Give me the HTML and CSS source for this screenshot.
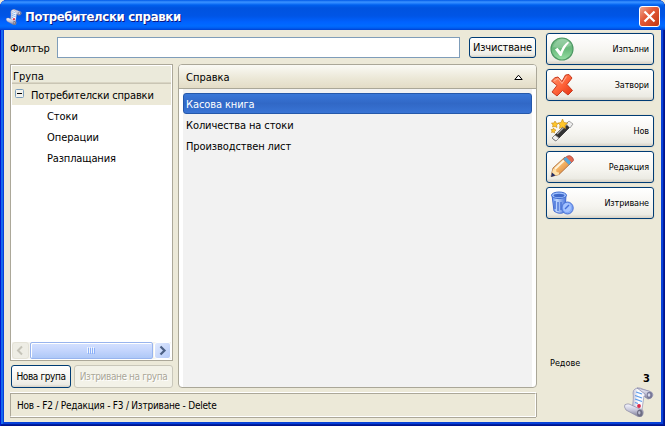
FILE: index.html
```html
<!DOCTYPE html>
<html lang="bg">
<head>
<meta charset="utf-8">
<title>Потребителски справки</title>
<link rel="stylesheet" href="styles.css">
</head>
<body>
<svg class="defs" width="0" height="0">
  <defs>
    <linearGradient id="green" x2="0" y2="1"><stop stop-color="#88c998"/><stop offset=".5" stop-color="#68b97b"/><stop offset="1" stop-color="#98e0a5"/></linearGradient>
    <linearGradient id="red" x2="1" y2="1"><stop stop-color="#ff9a72"/><stop offset=".5" stop-color="#ff6339"/><stop offset="1" stop-color="#e32f10"/></linearGradient>
    <linearGradient id="wood" x2="1" y2="1"><stop stop-color="#fff0ce"/><stop offset=".45" stop-color="#f5b666"/><stop offset="1" stop-color="#c96724"/></linearGradient>
    <linearGradient id="bin" x2="1"><stop stop-color="#5d91f2"/><stop offset=".35" stop-color="#c0d8ff"/><stop offset="1" stop-color="#4b75db"/></linearGradient>
    <linearGradient id="paper" x2="1"><stop stop-color="#b9b9d2"/><stop offset=".35" stop-color="#fff"/><stop offset=".8" stop-color="#eeeef8"/><stop offset="1" stop-color="#a9a9c4"/></linearGradient>
    <linearGradient id="roll" x2="0" y2="1"><stop stop-color="#f7f7ff"/><stop offset=".5" stop-color="#c4c4d8"/><stop offset="1" stop-color="#77778f"/></linearGradient>
    <symbol id="scroll" viewBox="0 0 30 30">
      <path d="M11 2Q13 .5 16 1L26 5 22 10 20 9 17 29 8 22Q10 11 9 6 9 3 11 2Z" fill="url(#paper)" stroke="#9292b3" stroke-width=".7"/>
      <path d="M13 1 25 4Q29 5 29 8 28 12 24 12L21 10 21 7Z" fill="url(#roll)" stroke="#8585a7" stroke-width=".7"/>
      <ellipse cx="25.5" cy="8" rx="2.7" ry="3.3" fill="#777898"/><ellipse cx="25" cy="8" rx="1.3" ry="1.8" fill="#d7d8ec"/>
      <path d="M12 5 18 7M11 8.5 18 11M11 12 18 14.5M11 15.5 14 16.5" stroke="#5b9bea" stroke-width="1.3"/>
      <path d="M3 17Q0 17 .5 20L2 23 14 29.5Q18 31 19 27 20 22 16 22L5 17Z" fill="url(#roll)" stroke="#8989a5" stroke-width=".7"/>
      <ellipse cx="15.8" cy="26" rx="2.8" ry="3.6" fill="#6e6e83"/><ellipse cx="15.3" cy="25.7" rx="1.2" ry="1.8" fill="#bdbdd1"/>
      <circle cx="15" cy="19" r="1.9" fill="#d82647"/>
    </symbol>
  </defs>
</svg>
<div class="window">
  <header class="titlebar">
    <svg class="app-icon" width="16" height="16"><use href="#scroll"/></svg>
    <h1>Потребителски справки</h1>
    <button class="close"><svg width="19" height="19"><path d="M4.5 4.5 14.5 14.5M14.5 4.5 4.5 14.5" stroke="#fff" stroke-width="2.2"/></svg></button>
  </header>
  <div class="content">
    <main>
      <div class="filter">
        <label for="filter">Филтър</label>
        <input id="filter" type="text">
        <button class="btn clear">Изчистване</button>
      </div>
      <div class="panes">
        <div class="left">
          <div class="tree">
            <div class="tree-head">Група</div>
            <div class="node root"><svg width="9" height="9"><rect x=".5" y=".5" width="8" height="8" rx="1" fill="#f4f3ed" stroke="#7b9ebd"/><path d="M2 4.5H7" stroke="#000"/></svg><span class="wide">Потребителски справки</span></div>
            <div class="node">Стоки</div>
            <div class="node">Операции</div>
            <div class="node pay">Разплащания</div>
            <div class="scrollbar">
              <span class="arrow off"><svg width="15" height="15"><path d="M9 3.5 5 7.5 9 11.5" fill="none" stroke="#c5c3b8" stroke-width="2"/></svg></span>
              <span class="thumb"><svg width="9" height="7"><path d="M.5 0V6M2.5 0V6M4.5 0V6M6.5 0V6" stroke="#eef4fe"/><path d="M1.5 1V7M3.5 1V7M5.5 1V7M7.5 1V7" stroke="#8cb0f8"/></svg></span>
              <span class="arrow"><svg width="15" height="15"><path d="M5.5 3.5 9.5 7.5 5.5 11.5" fill="none" stroke="#4d6185" stroke-width="2.2"/></svg></span>
            </div>
          </div>
          <div class="group-actions">
            <button class="btn new-group">Нова група</button>
            <button class="btn disabled">Изтриване на група</button>
          </div>
        </div>
        <div class="list">
          <div class="list-head"><span>Справка</span><svg width="9" height="6"><path d="M.8 5.5 4.5 1.2 8.2 5.5Z" fill="#fff" stroke="#000"/></svg></div>
          <div class="rows">
            <div class="row selected">Касова книга</div>
            <div class="row">Количества на стоки</div>
            <div class="row">Производствен лист</div>
          </div>
        </div>
      </div>
      <div class="status">Нов - F2 / Редакция - F3 / Изтриване - Delete</div>
    </main>
    <aside>
      <button class="btn action"><svg width="24" height="24"><circle cx="12" cy="12" r="11" fill="url(#green)" stroke="#4f9965" stroke-width="1.2"/><path d="M3 10Q7 2 13 2 19 2 22 8 13 13 3 10" fill="#fff" opacity=".16"/><path d="M5 12.5 7.5 10.8 10.5 14.5Q13 8 18 4.5L19 5.8Q14 11 11.5 19L10 19Z" fill="#fff"/></svg><span>Изпълни</span></button>
      <button class="btn action"><svg width="24" height="24"><path d="M1.500 8Q5 3.500 8 4L12 8.500 15.500 2 19 1.500 22 5 17 11.500 22.500 17.500 18 22 12.500 17.500 7 23 2 19 7 12.500Z" fill="url(#red)" stroke="#c63b20" stroke-linejoin="round"/><path d="M4 8 8 5.500 12 10.500 16.500 3.500" fill="none" stroke="#ffb199"/></svg><span>Затвори</span></button>
      <button class="btn action gap"><svg width="24" height="24"><path d="M2 19 18 3 22 6 6 22Z" fill="#333" stroke="#454545" stroke-linejoin="round"/><path d="M2 19 5 16 9 19 6 22ZM16 5 19 2 23 5 20 9Z" fill="#eee" stroke="#858585" stroke-width=".7"/><path d="M7 15 17 5" stroke="#aaa" stroke-width="1.4"/><path d="M12.500 0 14 3.500 17.500 4 15 6.500 15.500 9.500 12.500 8 9.500 9.500 10 6 8 4 11 3.500ZM5 2 6 4 8.500 4.500 6.500 6 7 8.500 5 7.500 2.500 8 3 6 1.500 4 4 4ZM3.500 9 4.500 10.500 6 11 4.500 12.500 4.500 14 3 13 1.500 13.500 2 12 1 10.500 3 10.500Z" fill="#ffc629" stroke="#c48a15" stroke-width=".6"/></svg><span>Нов</span></button>
      <button class="btn action"><svg width="24" height="24"><path d="M1 21.500 3 13 15 2 22 7 9 19.500Z" fill="url(#wood)" stroke="#a46331" stroke-width=".8"/><path d="M13.500 4.300 17 1.200Q20-.5 22.500 2.500T22 7L19.500 9.500Z" fill="#e26b52" stroke="#a84b43" stroke-width=".7"/><path d="M13.500 4 16 2 21.500 7.500 19 10Z" fill="#54a9db"/><path d="M1 21.500 3 14 6 14.500 6.500 17 9 17.500 9 19.500Z" fill="#ffe1a9"/><path d="M1 22 2 17.500 5.500 20.500Z" fill="#202b65"/><path d="M5 14 14 5.500" stroke="#fff3d9" stroke-width="2"/></svg><span>Редакция</span></button>
      <button class="btn action"><svg width="24" height="24"><path d="M2 4 4 20Q9 24 15 21L16 4Z" fill="url(#bin)" stroke="#4269ce"/><ellipse cx="9" cy="4.300" rx="7.500" ry="3.300" fill="#9fc2ff" stroke="#426dce"/><ellipse cx="9" cy="4.500" rx="5.500" ry="1.800" fill="#4069c9"/><path d="M5 10V18M8 11V20M11 11V19" stroke="#416bd1" stroke-width="1.300"/><ellipse cx="17.500" cy="17" rx="5.700" ry="6" fill="#83aaf8" stroke="#476fd3"/><ellipse cx="17" cy="16.500" rx="4" ry="4.500" fill="#a5c3ff"/><path d="M15 18 19 14" stroke="#446fd7" stroke-width="1.500"/></svg><span>Изтриване</span></button>
      <div class="summary"><span class="label">Редове</span><strong>3</strong><svg width="30" height="30"><use href="#scroll"/></svg></div>
    </aside>
  </div>
</div>
</body>
</html>
```

FILE: styles.css
```css
* { box-sizing: border-box; }
body { margin: 0; background: #ece9d8; color: #000; font: 11px/13px "DejaVu Sans Condensed", Tahoma, sans-serif; }
button, input { font: inherit; margin: 0; padding: 0; }
svg { display: block; flex: none; }
.defs { position: absolute; }
.window { width: 665px; height: 426px; display: flex; flex-direction: column; padding: 0 4px 4px; border-radius: 7px 7px 0 0; background: #0842d9; box-shadow: inset 1px 0 #0019cf, inset -1px 0 #00138c, inset 0 -1px #00138c, inset -2px -2px #001ea0, inset 3px 0 #166aee; overflow: hidden; }
.titlebar { height: 30px; flex: none; display: flex; align-items: center; margin: 0 -4px; padding: 3px 5px 0 6px; background: linear-gradient(#0058e7 0, #3b92ff 2px, #2a86ff 3px, #0060ee 5px, #0053df 8px, #0055e6 16px, #0062ff 22px, #006bff 26px, #005ef2 28px, #0040cf 30px); }
.app-icon { margin-top: 1px; }
h1 { flex: 1; margin: 0 0 0 3px; color: #fff; font: bold 13px/18px "DejaVu Sans Condensed", sans-serif; letter-spacing: -.32px; text-shadow: 1px 1px #0b1883; }
.close { width: 21px; height: 21px; border: 1px solid #fff; border-radius: 3px; background: linear-gradient(135deg, #f0a58e, #e35b3a 40%, #c43610); }
.content { flex: 1; min-height: 0; display: flex; padding: 3px 7px 5px 6px; gap: 9px; background: #ece9d8; }
main { width: 527px; display: flex; flex-direction: column; }
.filter { height: 32px; display: flex; align-items: flex-start; padding-top: 4px; }
.filter label { width: 47px; padding-top: 5px; letter-spacing: -.1px; }
.filter input { width: 403px; height: 21px; border: 1px solid #7f9db9; background: #fff; }
.btn { border: 1px solid #003c74; border-radius: 3px; background: linear-gradient(#fff, #f5f4ef 60%, #ecebe4 88%, #d6d0c5); color: #000; white-space: nowrap; }
.clear { width: 67px; height: 21px; margin-left: 9px; letter-spacing: -.15px; }
.panes { height: 324px; display: flex; gap: 5px; }
.left { width: 163px; display: flex; flex-direction: column; gap: 4px; }
.tree { height: 297px; border: 1px solid #aca899; background: #fff; display: flex; flex-direction: column; padding: 1px; }
.tree-head { height: 18px; padding: 4px 0 0 1px; line-height: 13px; background: #ebeadb; border-bottom: 1px solid #c9c5b4; box-shadow: inset 0 -1px #d9d5c4; }
.node { height: 21px; padding: 5px 0 0 35px; letter-spacing: -.05px; }
.root { display: flex; gap: 7px; padding: 5px 0 0 3px; background: #ece9d8; letter-spacing: -.15px; }
.pay { letter-spacing: -.15px; }
.scrollbar { height: 17px; margin-top: auto; display: flex; gap: 1px; background: #f5f4ee; }
.arrow { width: 17px; border: 1px solid #fff; border-radius: 3px; background: linear-gradient(135deg, #e1eafe, #b5caf8); }
.off { background: #eeede5; border-color: #e4e2d7; }
.thumb { width: 123px; margin-right: auto; border: 1px solid #98b4ee; border-radius: 2px; background: linear-gradient(#d5e1ff, #c4d5fd 50%, #aec8f7); display: flex; align-items: center; justify-content: center; box-shadow: inset 1px 1px #fff; }
.group-actions { display: flex; gap: 3px; padding-left: 1px; }
.group-actions .btn { height: 23px; width: 99px; font-size: 10px; letter-spacing: -.4px; }
.group-actions .new-group { width: 60px; }
.group-actions .disabled { border-color: #c9c7ba; background: #f3f2e8; color: #aaa798; text-shadow: 1px 1px #fff; }
.list { width: 359px; border: 1px solid #aaa798; border-radius: 4px; padding: 0 4px; background: #fff; }
.list-head { height: 24px; margin: 0 -4px; padding: 0 13px 0 7px; display: flex; align-items: center; justify-content: space-between; border-bottom: 1px solid #aaa798; border-radius: 3px 3px 0 0; background: linear-gradient(#fafaf5, #ebe7d6 60%, #e3dcc6); }
.list-head span { padding-top: 1px; }
.rows { height: 298px; padding-top: 4px; background: #f2f2f2; }
.row { height: 21px; padding: 5px 3px 0; letter-spacing: -.1px; }
.selected { color: #fff; border: 1px solid #2558aa; border-radius: 3px; padding: 4px 2px 0; background: linear-gradient(#3977d8, #3168c6 50%, #3974d5); }
.status { height: 24px; width: 526px; margin-top: 5px; padding: 5px 6px 0; border: 1px solid #aca899; border-right-color: #fff; border-bottom-color: #fff; box-shadow: 0 1px #aca899, 0 -1px #fff, 1px 0 #aca899; font-size: 10px; letter-spacing: -.22px; }
aside { width: 109px; display: flex; flex-direction: column; gap: 4px; }
.action { height: 32px; flex: none; display: flex; align-items: center; justify-content: space-between; padding: 0 4px 0 3px; font-size: 9px; letter-spacing: -.1px; box-shadow: 0 0 0 1px #e5e1d1; }
.gap { margin-top: 10px; }
.summary { margin-top: auto; display: flex; flex-direction: column; align-items: flex-end; font-size: 9px; }
.summary .label { align-self: flex-start; padding-left: 4px; }
.summary strong { margin: 2px 4px 2px 0; font-size: 11px; }
```
